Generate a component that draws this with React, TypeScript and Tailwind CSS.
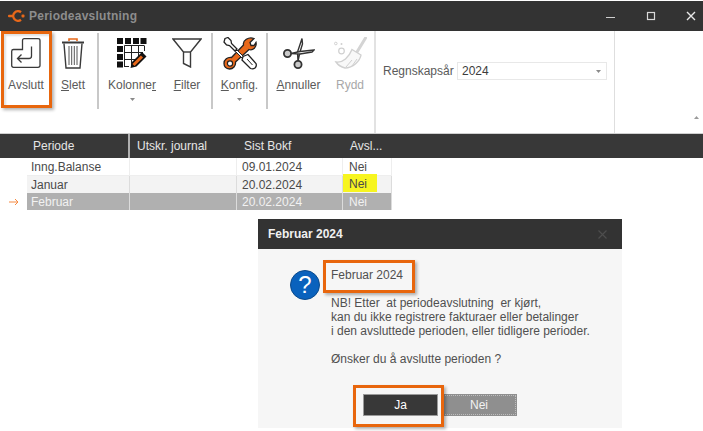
import React from "react";

const Arrow = () => (
  <svg width="5" height="3" viewBox="0 0 5 3" className="block"><path d="M0 0h5L2.500 3z" fill="#8a8a8a" /></svg>
);

const ToolButton = ({ w, icon, label, u, caret, dim }: { w: string; icon: React.ReactNode; label: string; u?: number; caret?: boolean; dim?: boolean }) => (
  <div className={`${w} flex flex-col items-center shrink-0`}>
    <div className="h-[40px] mt-[2px] flex items-center justify-center">{icon}</div>
    <div className={`mt-[5px] text-[12px] leading-[14px] whitespace-nowrap ${dim ? "text-[#a8a8a8]" : "text-[#5a5a5a]"}`}>
      {u === undefined ? label : (
        <>{label.slice(0, u)}<span className="underline">{label[u]}</span>{label.slice(u + 1)}</>
      )}
    </div>
    {caret && <div className="mt-[6px]"><Arrow /></div>}
  </div>
);

const Sep = () => <div className="w-[2px] h-[76px] mt-[2px] bg-[#c8c8c8] shrink-0" />;

const Row = ({ h, cls, per, date, yellow, arrow }: { h: string; cls: string; per: string; date: string; yellow?: boolean; arrow?: boolean }) => (
  <div className={`flex ${h} text-[12px]`}>
    <div className="w-[27px] flex items-center justify-center">
      {arrow && (
        <svg width="10" height="8" viewBox="0 0 10 8"><path d="M0 4h9M6 1l3 3-3 3" fill="none" stroke="#f58a42" strokeWidth="1" /></svg>
      )}
    </div>
    <div className={`w-[103px] pl-[4px] border-r border-[#dcdcdc] ${cls}`}>{per}</div>
    <div className={`w-[107px] border-r border-[#dcdcdc] ${cls}`} />
    <div className={`w-[106px] pl-[5px] border-r border-[#dcdcdc] ${cls}`}>{date}</div>
    <div className={`w-[49px] border-r border-[#dcdcdc] ${cls}`}>
      {yellow
        ? <div className="w-[34px] h-[18px] -mt-[2px] pl-[6px] leading-[20px] bg-[#f7f520]">Nei</div>
        : <div className="pl-[6px]">Nei</div>}
    </div>
  </div>
);

export default function App() {
  return (
    <div className="relative w-[703px] h-[431px] bg-white overflow-hidden text-[#4a4a4a]" style={{ fontFamily: '"Liberation Sans", Arial, sans-serif' }}>
      <div className="mt-[1px] h-[30px] bg-[#333333] flex items-center pl-[8px] pr-[7px]">
        <svg width="17" height="12" viewBox="0 0 17 12" className="shrink-0">
          <path d="M13 2.200A4.800 4.800 0 1 0 13 9.800" fill="none" stroke="#e8681a" strokeWidth="2.400" />
          <rect x="0" y="4.800" width="5.500" height="2.400" rx="1" fill="#e8681a" />
          <rect x="13.500" y="4.500" width="3" height="3" rx="1" fill="#e8681a" />
        </svg>
        <span className="ml-[4px] text-[12px] font-bold text-[#8d8d8d] tracking-[0.25px]">Periodeavslutning</span>
        <div className="ml-auto flex items-center">
          <svg width="10" height="10" viewBox="0 0 10 10"><path d="M0 6.500h9" stroke="#cfcfcf" strokeWidth="1" /></svg>
          <svg width="10" height="10" viewBox="0 0 10 10" className="ml-[30px]"><rect x="1.500" y="1.500" width="7" height="7" fill="none" stroke="#d8d8d8" strokeWidth="1.200" /></svg>
          <svg width="10" height="10" viewBox="0 0 10 10" className="ml-[30px]"><path d="M1 1l8 8M9 1l-8 8" stroke="#e8e8e8" strokeWidth="1.400" /></svg>
        </div>
      </div>

      <div className="h-[102px] flex">
        <div className="flex w-[374px] shrink-0">
          <ToolButton w="w-[52px]" label="Avslutt" icon={
            <svg width="30" height="30" viewBox="0 0 30 30"><path d="M11.500 11.500V2.500Q11.500 0.700 13.300 0.700H27Q29 0.700 29 2.500V27.500Q29 29.300 27 29.300H2.500Q0.700 29.300 0.700 27.500V13.300Q0.700 11.500 2.500 11.500H11.500z" fill="none" stroke="#3a3a3a" strokeWidth="1.300" /><path d="M20.500 8.500V18Q20.500 20.500 18 20.500H6.500M10.500 16.500L6.500 20.500L10.500 24.500" fill="none" stroke="#3a3a3a" strokeWidth="1.300" /></svg>
          } />
          <ToolButton w="w-[42px]" label="Slett" u={0} icon={
            <svg width="24" height="33" viewBox="0 0 24 33"><path d="M1 5.500H23" stroke="#3a3a3a" strokeWidth="2" /><path d="M8 4V2H16V4" fill="none" stroke="#e8681a" strokeWidth="1.600" /><path d="M3 6.500L5 31H19L21 6.500" fill="none" stroke="#3a3a3a" strokeWidth="1.400" /><path d="M8 9V28M10.700 9V28M13.300 9V28M16 9V28" stroke="#555" strokeWidth="1" /></svg>
          } />
          <div className="w-[3px] shrink-0" />
          <Sep />
          <ToolButton w="w-[66px]" label="Kolonner" u={7} caret icon={
            <svg width="30" height="30" viewBox="0 0 30 30">
              <path d="M0 0h6v6H0zM8 0h6v6H8zM16 0h6v6h-6zM23.500 0h6v6h-6zM0 8h6v6H0zM0 16h6v6H0zM0 23.500h6v6H0z" fill="#111" />
              <path d="M7.500 7.500H27M7.500 14.500H26M7.500 21.500H19M7.500 28.500H12M7.500 7.500V29M14.500 7.500V28M21.500 7.500V21M27.500 7.500V13" stroke="#222" strokeWidth="1" fill="none" />
              <path d="M13.500 30L15 24L25 14L29.500 18.500L19.500 28.500z" fill="#111" />
              <path d="M16.500 27L25 18.500" stroke="#e8681a" strokeWidth="3" />
            </svg>
          } />
          <ToolButton w="w-[44px]" label="Filter" u={0} icon={
            <svg width="30" height="30" viewBox="0 0 30 30"><path d="M1 1H29L18.500 14V29L11.500 25.500V14z" fill="none" stroke="#3a3a3a" strokeWidth="1.400" /><path d="M11.500 14H18.500" stroke="#3a3a3a" strokeWidth="1.400" /></svg>
          } />
          <div className="w-[2px] shrink-0" />
          <Sep />
          <ToolButton w="w-[53px]" label="Konfig." u={0} caret icon={
            <svg width="34" height="33" viewBox="0 0 34 33">
              <path d="M2 1.500L5 0.500L8 3.500L8.500 6.500L14 12L12 14L6.500 8.500L3.500 8L1 5z" fill="#fff" stroke="#222" strokeWidth="1.300" />
              <path d="M31 1.500L27 5.500L28 8.500L31 8.500L33 5.500C34 10 30 14 26 12.500L12.500 25C13 29 10 32 6.500 32C3 32 1 29.500 1 26.500C1 22.500 4.500 20 8.500 20.500L20.500 8C19.500 3.500 25.500 -0.500 31 1.500z" fill="#e8681a" stroke="#222" strokeWidth="1.300" />
              <circle cx="7" cy="26.500" r="2.600" fill="#fff" stroke="#222" strokeWidth="1.200" />
              <path d="M14 13L21 20L19.500 21.500L12.500 14.500z" fill="#fff" stroke="#222" strokeWidth="1" />
              <path d="M20 19.500L25 17.500L33 26.500Q34 29 32 31Q30 32.500 27.500 31.500L19 23z" fill="#fff" stroke="#222" strokeWidth="1.300" />
              <path d="M24 22L29.500 28" stroke="#222" strokeWidth="1" />
            </svg>
          } />
          <Sep />
          <ToolButton w="w-[61px]" label="Annuller" u={0} icon={
            <svg width="32" height="31" viewBox="0 0 32 31">
              <path d="M19 0.500L14.500 14L15 23L17 14L19.500 6z" fill="#fff" stroke="#333" strokeWidth="1.400" />
              <path d="M31 12L17 13.500L8 15.500L17 16L29 14z" fill="#fff" stroke="#333" strokeWidth="1.400" />
              <circle cx="15" cy="26.500" r="3.600" fill="#c9c9c9" stroke="#333" strokeWidth="1.800" />
              <circle cx="4.500" cy="15.500" r="3.600" fill="#c9c9c9" stroke="#333" strokeWidth="1.800" />
            </svg>
          } />
          <ToolButton w="w-[42px]" label="Rydd" dim icon={
            <svg width="33" height="32" viewBox="0 0 33 32">
              <path d="M31.500 1L23 15" stroke="#d4d4d4" strokeWidth="3" strokeLinecap="round" />
              <path d="M18 12.500L27 18C26 24 19 31 11 31C7 30 4 28 2 25C9 26 15 20 18 12.500z" fill="#f8f8f8" stroke="#d0d0d0" strokeWidth="1.400" />
              <path d="M12 30L18 23M18 29L23 22" stroke="#d0d0d0" strokeWidth="1" />
              <circle cx="7.500" cy="14" r="2.800" fill="none" stroke="#d0d0d0" strokeWidth="1.200" />
              <circle cx="1.800" cy="6.500" r="1.300" fill="none" stroke="#d0d0d0" />
              <circle cx="7.500" cy="7" r="1" fill="#d0d0d0" />
            </svg>
          } />
        </div>
        <div className="w-[2px] bg-[#e2e2e2] shrink-0" />
        <div className="w-[239px] shrink-0 border-r border-[#dedede] flex items-start pl-[7px] pt-[31px]">
          <span className="text-[12px] leading-[18px] text-[#5a5a5a] w-[74px] shrink-0 whitespace-nowrap">Regnskapsår</span>
          <div className="w-[150px] h-[18px] border border-[#e8e8e8] flex items-center justify-between pl-[4px] pr-[5px] text-[12px] text-[#3c3c3c]">
            2024<Arrow />
          </div>
        </div>
        <div className="flex-1 flex items-end justify-end pr-[4px] pb-[14px]">
          <svg width="5" height="3" viewBox="0 0 5 3"><path d="M0 3L2.500 0L5 3z" fill="#9a9a9a" /></svg>
        </div>
      </div>

      <div className="h-[25px] bg-[#383838] border-t border-[#d0d0d0] flex text-[12px] text-[#e6e6e6] leading-[24px]">
        <div className="w-[130px] pl-[33px] border-r-2 border-[#b0b0b0] shrink-0">Periode</div>
        <div className="w-[107px] pl-[7px] shrink-0">Utskr. journal</div>
        <div className="w-[106px] pl-[7px] shrink-0">Sist Bokf</div>
        <div className="pl-[7px]">Avsl...</div>
      </div>
      <Row h="h-[18px] leading-[19px]" cls="bg-white text-[#4a4a4a] border-b border-[#eeeeee]" per="Inng.Balanse" date="09.01.2024" />
      <Row h="h-[17px] leading-[18px]" cls="bg-[#f3f3f3] text-[#4a4a4a]" per="Januar" date="20.02.2024" yellow />
      <Row h="h-[17px] leading-[18px]" cls="bg-[#b0b0b0] text-[#f2f2f2]" per="Februar" date="20.02.2024" arrow />

      <div className="absolute left-[1px] top-[31px] w-[51px] h-[77px] border-[3px] border-[#e8660d] shadow-[2px_2px_3px_rgba(0,0,0,0.3),inset_2px_2px_2px_rgba(0,0,0,0.12)]" />

      <div className="absolute left-[258px] top-[219px] w-[364px] h-[209px] bg-[#f6f6f6]">
        <div className="h-[30px] bg-[#333333] flex items-center justify-between pl-[10px] pr-[15px]">
          <span className="text-[12px] font-bold text-[#f0f0f0]">Februar 2024</span>
          <svg width="9" height="9" viewBox="0 0 9 9"><path d="M0.500 0.500l8 8M8.500 0.500l-8 8" stroke="#4d4d4d" strokeWidth="1.200" /></svg>
        </div>
        <div className="flex pl-[32px] pt-[21px]">
          <div className="w-[30px] h-[30px] rounded-full bg-[#0a62bd] border border-[#0a4a8c] flex items-center justify-center text-white text-[24px] leading-none shrink-0">?</div>
          <div className="ml-[11px] -mt-[2px] text-[12px] leading-[14px] text-[#505050]">
            <div>Februar 2024</div>
            <div className="mt-[14px] whitespace-pre">NB! Etter  at periodeavslutning  er kjørt,</div>
            <div>kan du ikke registrere fakturaer eller betalinger</div>
            <div>i den avsluttede perioden, eller tidligere perioder.</div>
            <div className="mt-[14px]">Ønsker du å avslutte perioden ?</div>
          </div>
        </div>
        <div className="absolute left-[105px] top-[175px] flex">
          <div className="w-[75px] h-[22px] bg-[#383838] border border-[#9a9a9a] text-white text-[12px] leading-[20px] text-center">Ja</div>
          <div className="ml-[3px] w-[76px] h-[22px] bg-[#8f8f8f] p-[1px]">
            <div className="h-full border border-dotted border-[#bdbdbd] text-[#f2f2f2] text-[12px] leading-[18px] text-center">Nei</div>
          </div>
        </div>
        <div className="absolute left-[65px] top-[41px] w-[92px] h-[33px] border-[3px] border-[#e8660d] shadow-[2px_2px_3px_rgba(0,0,0,0.3)]" />
        <div className="absolute left-[95px] top-[166px] w-[91px] h-[42px] border-[3px] border-[#e8660d] shadow-[2px_2px_3px_rgba(0,0,0,0.3)]" />
      </div>
    </div>
  );
}
